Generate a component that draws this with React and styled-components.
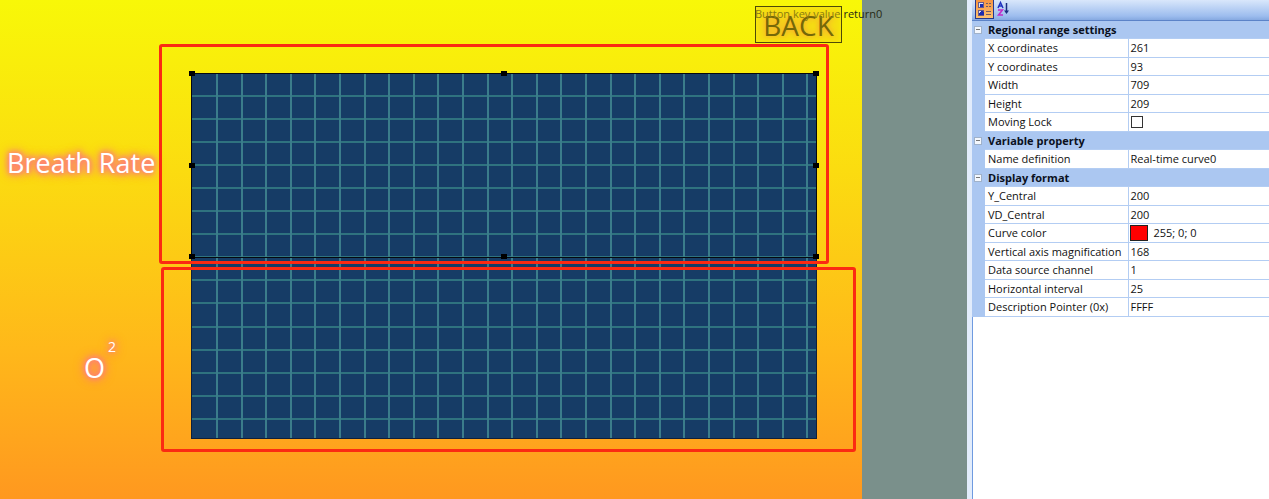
import React, { useState } from 'react';
import styled, { createGlobalStyle } from 'styled-components';

const GlobalStyle = createGlobalStyle`
  * {
    box-sizing: border-box;
  }
  body {
    margin: 0;
    font-family: 'Open Sans', 'Noto Sans', sans-serif;
    font-size: 11px;
    color: #111111;
  }
`;

const Container = styled.div`
  display: flex;
  min-height: 100vh;
`;

const Workspace = styled.main`
  flex: 1;
  min-width: 0;
  display: flex;
  padding-right: 105px;
  background: #7a908b;
`;

const Screen = styled.div`
  flex: 1;
  position: relative;
  background: linear-gradient(#f8f808, #fbdc10 34%, #ffb81a 70%, #ff981f);
`;

/* Anything dropped on the screen is placed by its own coordinates */
const Item = styled.div`
  position: absolute;
  left: ${(p) => p.$x}px;
  top: ${(p) => p.$y}px;
  width: ${(p) => (p.$w ? `${p.$w}px` : 'auto')};
  height: ${(p) => (p.$h ? `${p.$h}px` : 'auto')};
`;

const Caption = styled(Item)`
  color: white;
  font-size: ${(p) => p.$size}px;
  line-height: 1;
  white-space: nowrap;
  text-shadow: 0 0 4px #ff7a80, 0 0 6px #ff7a80, 0 0 8px #ff7a80,
    0 0 12px #ff7a70;
`;

const BackButton = styled.button`
  position: absolute;
  left: 755px;
  top: 6px;
  width: 87px;
  height: 37px;
  padding: 0;
  border: 1px solid #4d4a08;
  background: #f5e012;
  box-shadow: inset 0 0 4px #f5ee0c;
  color: #756808;
  font-family: inherit;
  font-size: 28px;
  line-height: 37px;
  text-shadow: 0 0 5px #f5a632, 0 0 8px #f5b030;
`;

const KeyValue = styled(Item)`
  line-height: 14px;
  white-space: nowrap;
  color: #262a14;

  span {
    color: #8a7c10;
  }
`;

const Plot = styled(Item)`
  background: #163c66;
  border: 1px solid #10203a;

  svg {
    display: block;
    width: 100%;
    height: 100%;
  }
`;

const Selection = styled(Item)`
  border: 1px solid #05080f;
`;

const Handle = styled.span`
  position: absolute;
  left: ${(p) => p.$left};
  top: ${(p) => p.$top};
  width: 6px;
  height: 5px;
  margin: -3px 0 0 -3px;
  background: black;
`;

const Frame = styled(Item)`
  border: 3px solid #fb2a12;
  border-radius: 3px;
  pointer-events: none;
`;

const Panel = styled.aside`
  width: 302px;
  border-left: 5px solid #e2ecfb;
  background: white;
  box-shadow: inset 1px 0 0 #6f9be0;
`;

const Toolbar = styled.div`
  display: flex;
  gap: 1px;
  height: 21px;
  padding-left: 3px;
  background: linear-gradient(#d9e7fb, #9dbdee 80%, #86a9e0);
  border-bottom: 1px solid #5c83c8;
`;

const ToolButton = styled.button`
  width: 19px;
  height: 19px;
  padding: 0;
  border: 1px solid ${(p) => (p.$active ? '#26388c' : 'transparent')};
  border-top: 0;
  background: ${(p) =>
    p.$active ? 'linear-gradient(#f79440, #fdc070)' : 'transparent'};

  svg {
    display: block;
  }
`;

const Properties = styled.table`
  width: 100%;
  height: 296px;
  border-collapse: collapse;
  table-layout: fixed;
  line-height: 14px;

  th,
  td {
    padding: 0 0 0 3px;
    text-align: left;
    white-space: nowrap;
    overflow: hidden;
  }
`;

const GutterCell = styled.td`
  && {
    background: #abc7f1;
    padding-left: 2px;
  }
`;

const GroupName = styled.th`
  background: #abc7f1;
  color: #0a1020;
  font-weight: 700;
`;

const PropName = styled.th`
  border: 1px solid #b3cdf3;
  border-left: 0;
  font-weight: 400;
`;

const PropValue = styled.td`
  border: 1px solid #b3cdf3;
  border-right: 0;

  && {
    padding-left: 2px;
  }
`;

const Toggle = styled.button`
  display: block;
  position: relative;
  width: 8px;
  height: 8px;
  padding: 0;
  border: 1px solid #a0b2ca;
  background: #f4f8fe;

  &::after {
    content: '';
    position: absolute;
    left: 1px;
    right: 1px;
    top: 2px;
    height: 1px;
    background: #777777;
  }
`;

const Check = styled.input`
  appearance: none;
  display: block;
  width: 12px;
  height: 12px;
  margin: 0;
  border: 1px solid #333333;
  background: white;

  &:checked {
    background: #333333;
  }
`;

const Colour = styled.span`
  display: flex;
  align-items: center;
  gap: 6px;
  height: 14px;
  margin-left: -1px;

  i {
    width: 18px;
    height: 16px;
    border: 1px solid #222222;
    background: ${(p) => p.$value};
  }
`;

const groups = [
  {
    name: 'Regional range settings',
    rows: [
      ['X coordinates', '261'],
      ['Y coordinates', '93'],
      ['Width', '709'],
      ['Height', '209'],
      ['Moving Lock', false],
    ],
  },
  {
    name: 'Variable property',
    rows: [['Name definition', 'Real-time curve0']],
  },
  {
    name: 'Display format',
    rows: [
      ['Y_Central', '200'],
      ['VD_Central', '200'],
      ['Curve color', '255; 0; 0'],
      ['Vertical axis magnification', '168'],
      ['Data source channel', '1'],
      ['Horizontal interval', '25'],
      ['Description Pointer (0x)', 'FFFF'],
    ],
  },
];

const handles = [
  ['0%', '0%'],
  ['50%', '0%'],
  ['100%', '0%'],
  ['0%', '50%'],
  ['100%', '50%'],
  ['0%', '100%'],
  ['50%', '100%'],
  ['100%', '100%'],
];

const columns = Array.from({ length: 25 }, (_, i) => Math.round(24 + i * 24.6));
const lines = Array.from({ length: 15 }, (_, i) => Math.round(21 + i * 23.05));

const GridLines = () => (
  <svg aria-hidden="true">
    {lines.map((y) => (
      <rect key={y} x="0" y={y} width="100%" height="2" fill="#2f737f" />
    ))}
    {columns.map((x) => (
      <rect key={x} x={x} y="0" width="2" height="100%" fill="#3b7d8b" />
    ))}
  </svg>
);

const CategoryIcon = () => (
  <svg width="17" height="18" viewBox="0 0 17 18" shapeRendering="crispEdges">
    <path d="M2.500 2.500h5v5h-5zM2.500 10.500h5v5h-5z" fill="#dfe3f4" stroke="#6a5a8a" />
    <path d="M4 4h3v3H4z" fill="#1b2bb0" />
    <path d="M3 13h1v-1h1v-1h2v1h1v3H3z" fill="#1b2bb0" />
    <path
      d="M10 3h2v1h-2zM13 3h2v1h-2zM10 6h2v1h-2zM13 6h2v1h-2zM10 11h5v1h-5zM10 14h5v1h-5z"
      fill="#705c68"
    />
  </svg>
);

const SortIcon = () => (
  <svg width="17" height="18" viewBox="0 0 17 18" fill="none">
    <path d="M2 8L4.500 2.500L7 8M3 6h3" stroke="#2032c0" strokeWidth="1.500" />
    <path d="M2 10h4.500L2.500 15H7" stroke="#c02cc8" strokeWidth="1.500" />
    <path d="M10.500 3v9" stroke="#1a2c80" strokeWidth="1.500" />
    <path d="M8 10.500h5L10.500 14z" fill="#1a2c80" />
  </svg>
);

const Value = ({ name, value, locked, onLock }) => {
  if (name === 'Moving Lock') {
    return (
      <Check
        id="moving-lock"
        type="checkbox"
        checked={locked}
        onChange={(e) => onLock(e.target.checked)}
      />
    );
  }
  if (name === 'Curve color') {
    return (
      <Colour $value={`rgb(${value.split('; ').join(',')})`}>
        <i />
        {value}
      </Colour>
    );
  }
  return value;
};

const PropertyPanel = () => {
  const [closed, setClosed] = useState({});
  const [locked, setLocked] = useState(false);

  return (
    <Panel>
      <Toolbar>
        <ToolButton $active aria-label="Categorized">
          <CategoryIcon />
        </ToolButton>
        <ToolButton aria-label="Alphabetical">
          <SortIcon />
        </ToolButton>
      </Toolbar>
      <Properties>
        <colgroup>
          <col width="13" />
          <col width="143" />
          <col />
        </colgroup>
        {groups.map((group) => (
          <tbody key={group.name}>
            <tr>
              <GutterCell>
                <Toggle
                  aria-label={`Toggle ${group.name}`}
                  onClick={() =>
                    setClosed({ ...closed, [group.name]: !closed[group.name] })
                  }
                />
              </GutterCell>
              <GroupName colSpan={2}>{group.name}</GroupName>
            </tr>
            {!closed[group.name] &&
              group.rows.map(([name, value]) => (
                <tr key={name}>
                  <GutterCell />
                  <PropName scope="row">
                    {name === 'Moving Lock' ? (
                      <label htmlFor="moving-lock">{name}</label>
                    ) : (
                      name
                    )}
                  </PropName>
                  <PropValue>
                    <Value
                      name={name}
                      value={value}
                      locked={locked}
                      onLock={setLocked}
                    />
                  </PropValue>
                </tr>
              ))}
          </tbody>
        ))}
      </Properties>
    </Panel>
  );
};

const App = () => {
  return (
    <Container>
      <GlobalStyle />
      <Workspace>
        <Screen>
          <Caption $x={7} $y={149} $size={27}>
            Breath Rate
          </Caption>
          <Caption $x={84} $y={354} $size={27}>
            O
          </Caption>
          <Caption $x={108} $y={340} $size={14}>
            2
          </Caption>
          <BackButton>BACK</BackButton>
          <KeyValue $x={755} $y={7}>
            <span>Button key value</span> return0
          </KeyValue>
          <Plot $x={191} $y={73} $w={626} $h={366}>
            <GridLines />
          </Plot>
          <Selection $x={191} $y={73} $w={626} $h={185}>
            {handles.map(([left, top]) => (
              <Handle key={left + top} $left={left} $top={top} />
            ))}
          </Selection>
          <Frame $x={159} $y={44} $w={670} $h={220} />
          <Frame $x={161} $y={267} $w={695} $h={185} />
        </Screen>
      </Workspace>
      <PropertyPanel />
    </Container>
  );
};

export default App;
